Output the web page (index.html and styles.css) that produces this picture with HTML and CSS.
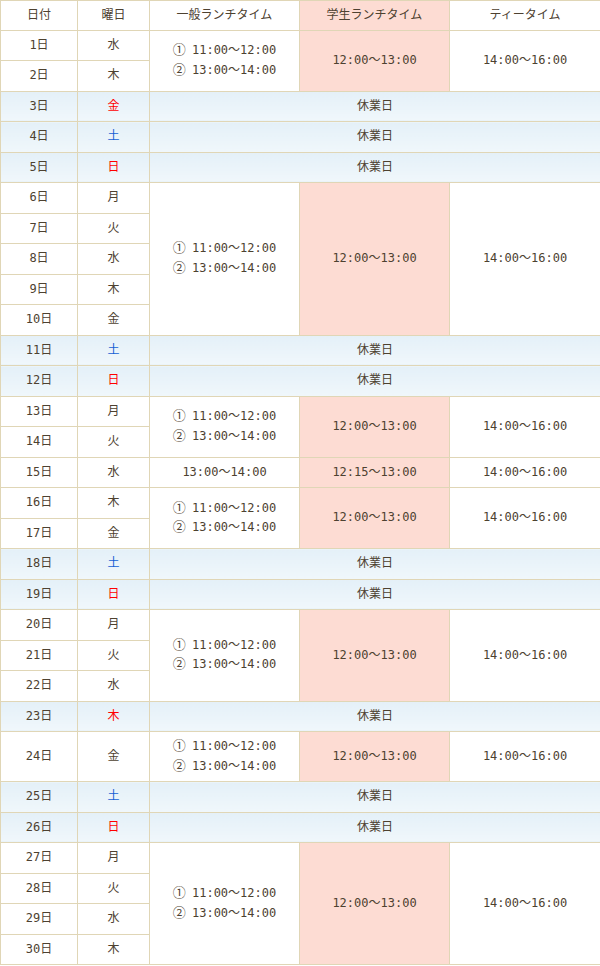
FILE: index.html
```html
<!DOCTYPE html>
<html lang="ja">
<head>
<meta charset="utf-8">
<title>スケジュール</title>
<link rel="stylesheet" href="styles.css">
</head>
<body>
<table class="schedule">
  <colgroup>
    <col class="c-date"><col class="c-day"><col class="c-gen"><col class="c-stu"><col class="c-tea">
  </colgroup>
  <thead>
    <tr><th>日付</th><th>曜日</th><th>一般ランチタイム</th><th class="stu">学生ランチタイム</th><th>ティータイム</th></tr>
  </thead>
  <tbody>
    <tr><td>1日</td><td>水</td><td rowspan="2"><span class="n">①</span> 11:00〜12:00<br><span class="n">②</span> 13:00〜14:00</td><td rowspan="2" class="stu">12:00〜13:00</td><td rowspan="2">14:00〜16:00</td></tr>
    <tr><td>2日</td><td>木</td></tr>
    <tr class="closed"><td>3日</td><td class="red">金</td><td colspan="3">休業日</td></tr>
    <tr class="closed"><td>4日</td><td class="blue">土</td><td colspan="3">休業日</td></tr>
    <tr class="closed"><td>5日</td><td class="red">日</td><td colspan="3">休業日</td></tr>
    <tr><td>6日</td><td>月</td><td rowspan="5"><span class="n">①</span> 11:00〜12:00<br><span class="n">②</span> 13:00〜14:00</td><td rowspan="5" class="stu">12:00〜13:00</td><td rowspan="5">14:00〜16:00</td></tr>
    <tr><td>7日</td><td>火</td></tr>
    <tr><td>8日</td><td>水</td></tr>
    <tr><td>9日</td><td>木</td></tr>
    <tr><td>10日</td><td>金</td></tr>
    <tr class="closed"><td>11日</td><td class="blue">土</td><td colspan="3">休業日</td></tr>
    <tr class="closed"><td>12日</td><td class="red">日</td><td colspan="3">休業日</td></tr>
    <tr><td>13日</td><td>月</td><td rowspan="2"><span class="n">①</span> 11:00〜12:00<br><span class="n">②</span> 13:00〜14:00</td><td rowspan="2" class="stu">12:00〜13:00</td><td rowspan="2">14:00〜16:00</td></tr>
    <tr><td>14日</td><td>火</td></tr>
    <tr><td>15日</td><td>水</td><td>13:00〜14:00</td><td class="stu">12:15〜13:00</td><td>14:00〜16:00</td></tr>
    <tr><td>16日</td><td>木</td><td rowspan="2"><span class="n">①</span> 11:00〜12:00<br><span class="n">②</span> 13:00〜14:00</td><td rowspan="2" class="stu">12:00〜13:00</td><td rowspan="2">14:00〜16:00</td></tr>
    <tr><td>17日</td><td>金</td></tr>
    <tr class="closed"><td>18日</td><td class="blue">土</td><td colspan="3">休業日</td></tr>
    <tr class="closed"><td>19日</td><td class="red">日</td><td colspan="3">休業日</td></tr>
    <tr><td>20日</td><td>月</td><td rowspan="3"><span class="n">①</span> 11:00〜12:00<br><span class="n">②</span> 13:00〜14:00</td><td rowspan="3" class="stu">12:00〜13:00</td><td rowspan="3">14:00〜16:00</td></tr>
    <tr><td>21日</td><td>火</td></tr>
    <tr><td>22日</td><td>水</td></tr>
    <tr class="closed"><td>23日</td><td class="red">木</td><td colspan="3">休業日</td></tr>
    <tr><td>24日</td><td>金</td><td><span class="n">①</span> 11:00〜12:00<br><span class="n">②</span> 13:00〜14:00</td><td class="stu">12:00〜13:00</td><td>14:00〜16:00</td></tr>
    <tr class="closed"><td>25日</td><td class="blue">土</td><td colspan="3">休業日</td></tr>
    <tr class="closed"><td>26日</td><td class="red">日</td><td colspan="3">休業日</td></tr>
    <tr><td>27日</td><td>月</td><td rowspan="4"><span class="n">①</span> 11:00〜12:00<br><span class="n">②</span> 13:00〜14:00</td><td rowspan="4" class="stu">12:00〜13:00</td><td rowspan="4">14:00〜16:00</td></tr>
    <tr><td>28日</td><td>火</td></tr>
    <tr><td>29日</td><td>水</td></tr>
    <tr><td>30日</td><td>木</td></tr>
  </tbody>
</table>
</body>
</html>
```
FILE: styles.css
```css
html, body {
  margin: 0;
  padding: 0;
  background: #ffffff;
}

.schedule {
  width: 600px;
  border-collapse: collapse;
  table-layout: fixed;
  font-family: "DejaVu Sans Mono", "Noto Sans CJK JP", monospace;
  font-size: 12px;
  line-height: 19.5px;
  color: #4d4130;
}

.c-date { width: 77px; }
.c-day { width: 72px; }
.c-gen { width: 150px; }
.c-stu { width: 150px; }
.c-tea { width: 151px; }

.schedule th,
.schedule td {
  border: 1px solid #e0d6b6;
  padding: 5px 0;
  text-align: center;
  vertical-align: middle;
  font-weight: normal;
  background: #ffffff;
}

.schedule th {
  padding: 5px 0 4px;
}

.schedule .n {
  display: inline-block;
  width: 12px;
  font-family: "Noto Sans CJK JP", sans-serif;
  font-size: 13px;
  line-height: 12px;
  text-align: center;
}

.schedule .stu {
  background: #fddcd3;
}

.schedule .closed td {
  background: linear-gradient(to bottom, #e4f0f8 0%, #f0f7fb 100%);
}

.schedule td.red { color: #ff0000; }
.schedule td.blue { color: #1560d4; }
```
